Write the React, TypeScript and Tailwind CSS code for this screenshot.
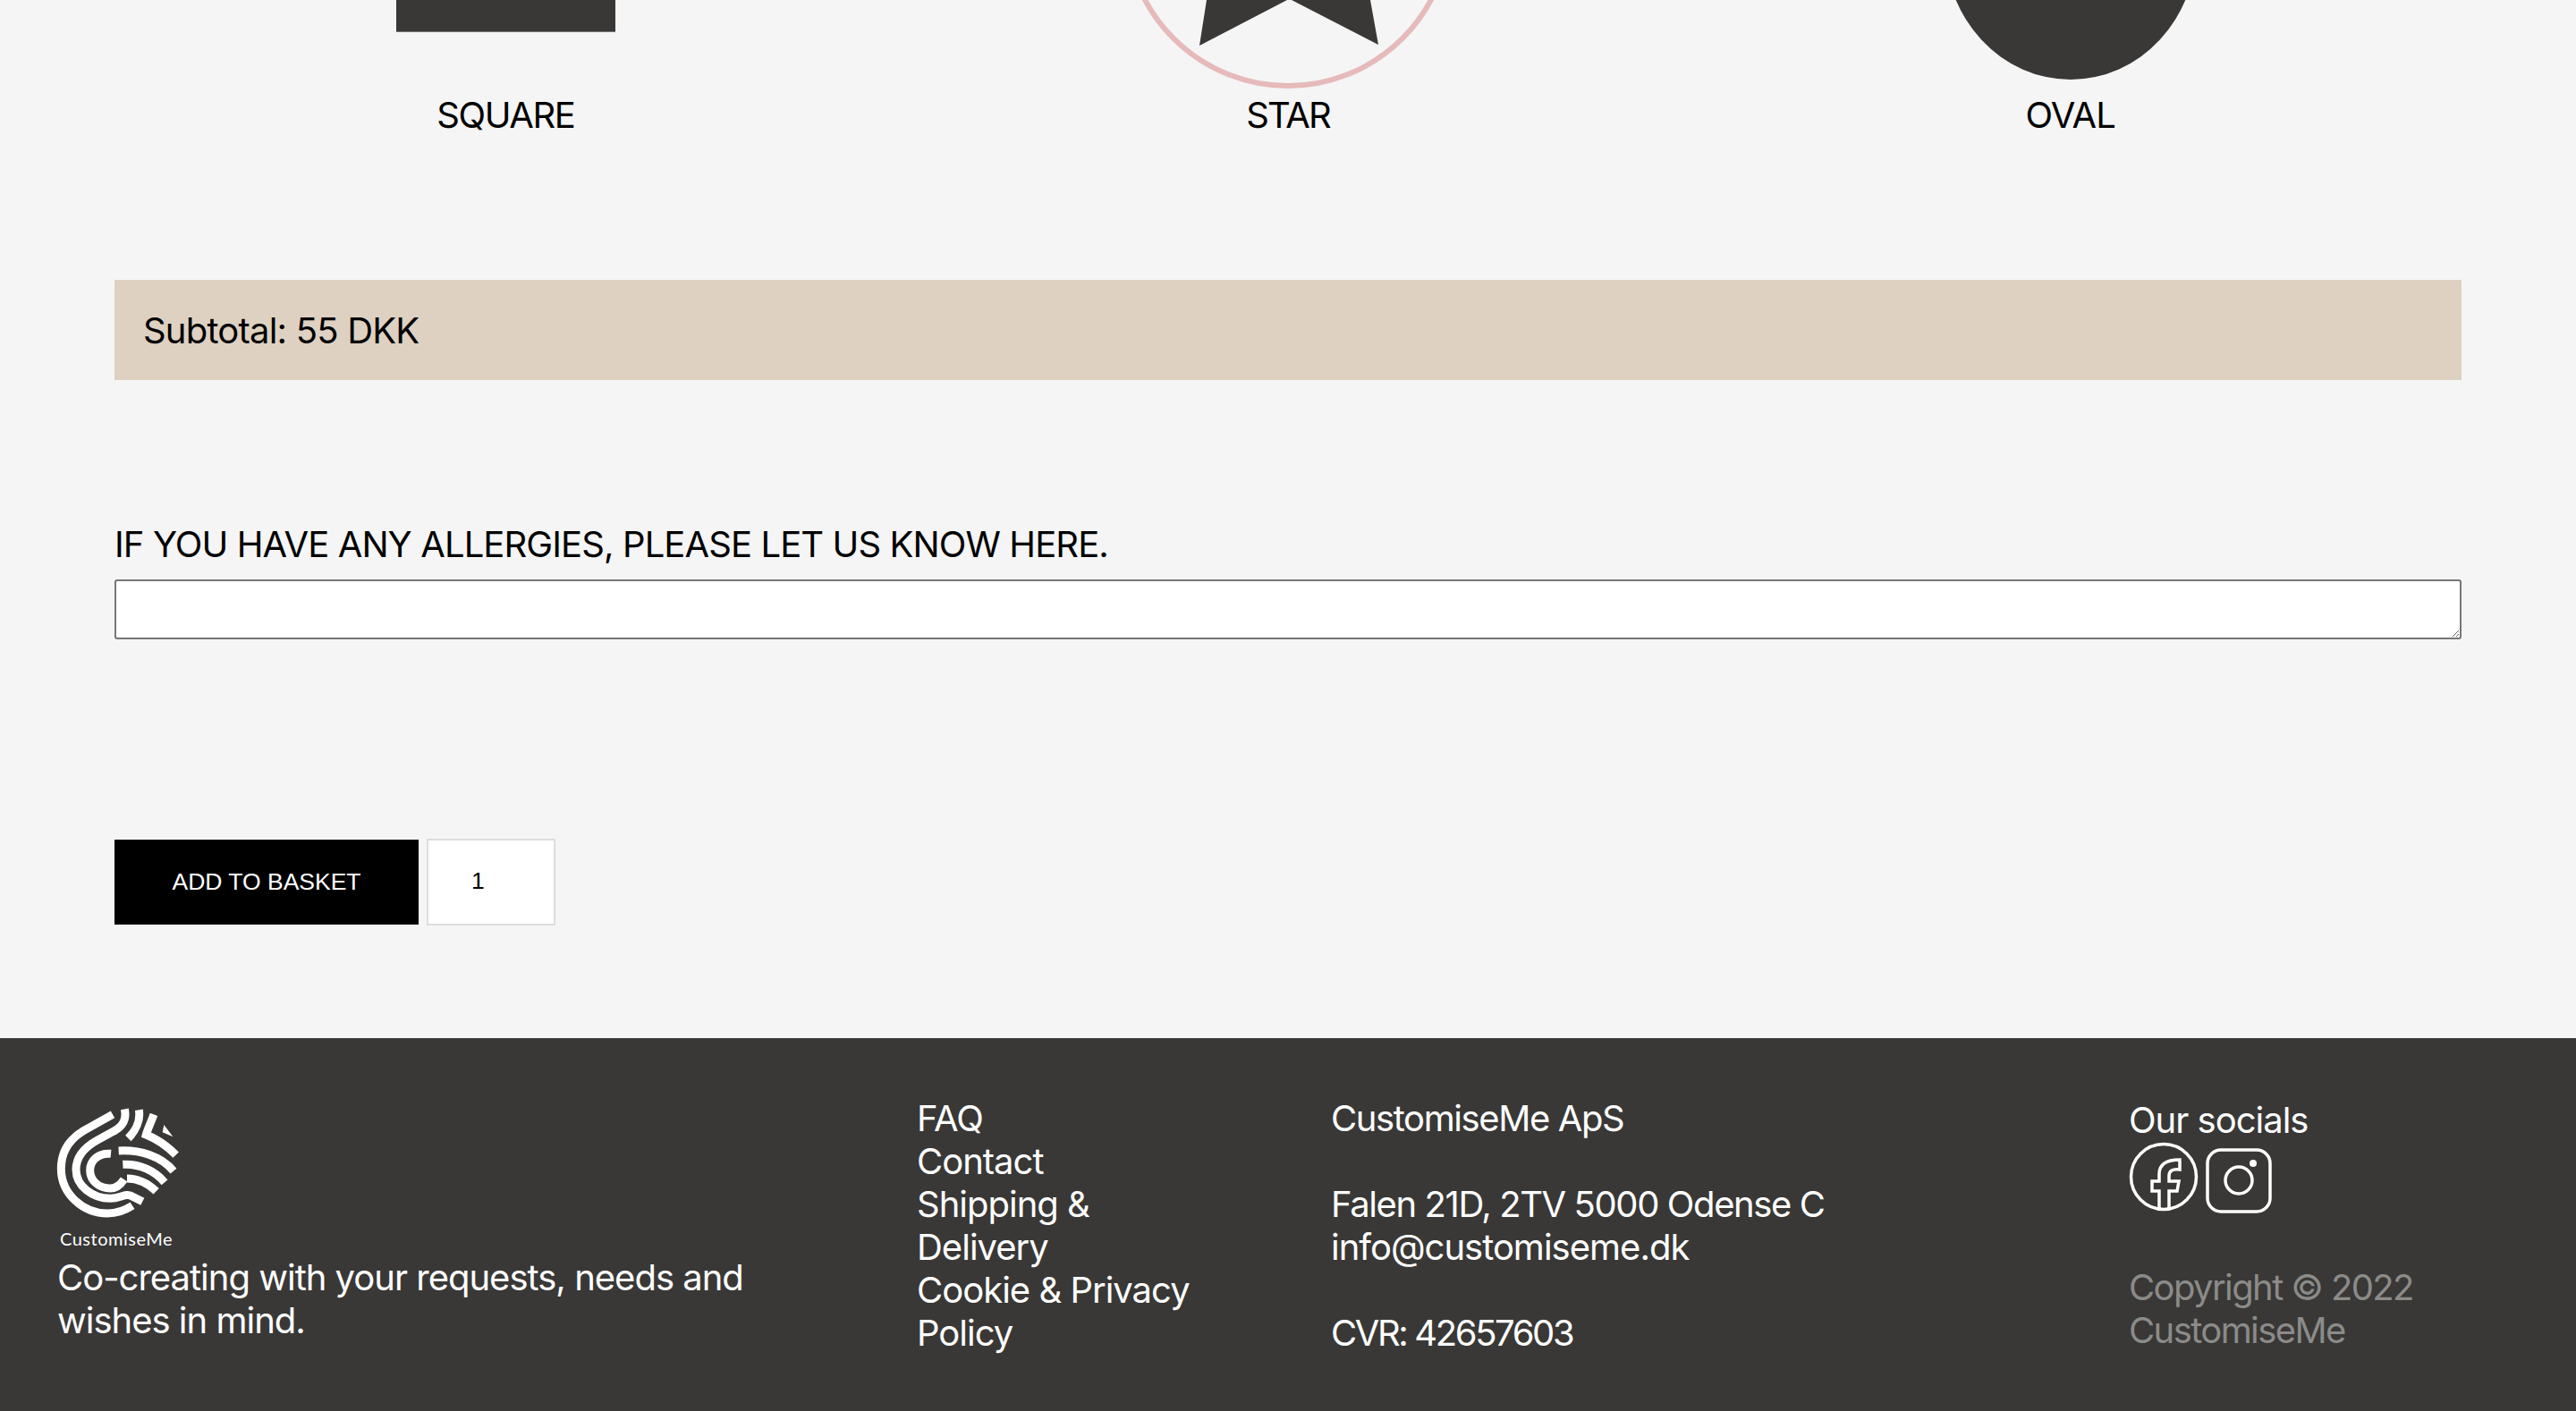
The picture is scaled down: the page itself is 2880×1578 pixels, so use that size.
import React from "react";

const font = "font-['Inter','Noto_Sans',sans-serif]";

function Logo() {
  return (
    <svg viewBox="60 85 420 375" className="w-[140px] h-[125px]" fill="none" stroke="#fff" strokeWidth="27">
      <path d="M258 110 L160 165 C105 198 85 245 85 292 C85 378 160 442 240 442 C270 442 300 432 324 416" />
      <path d="M298 92 C306 130 290 152 258 168 L205 197 C155 225 135 260 135 295 C135 350 190 392 250 392 C285 392 300 372 322 384 L358 402" />
      <path d="M252 242 C210 238 182 265 182 298 C182 335 215 358 250 358 C270 358 285 345 296 328" />
      <path d="M278 232 C350 228 420 250 462 300" />
      <path d="M292 278 C350 275 400 300 432 338" />
      <path d="M306 325 C345 325 380 345 404 368" />
      <path d="M346 95 C352 130 335 165 310 190" />
      <path d="M396 110 C385 140 375 160 370 178 C400 190 440 215 470 246" />
      <path d="M430 145 L460 185 L425 170 Z" fill="#fff" stroke="none" />
    </svg>
  );
}

function SocialIcons() {
  return (
    <div className="flex items-start gap-[8px]">
      <svg viewBox="0 0 78 78" className="w-[78px] h-[78px]" fill="none" stroke="#fff" strokeWidth="3.5">
        <circle cx="39" cy="39" r="36.5" />
        <path d="M34 74 V55 H26 V44 H34 V36 C34 25 42 20 57 20 V31 C48 30 45 33 45 38 V44 H56 L54 55 H45 V74" />
      </svg>
      <svg viewBox="0 0 74 74" className="w-[74px] h-[74px] mt-[7px]" fill="none" stroke="#fff" strokeWidth="3.5">
        <rect x="2" y="2" width="70" height="69" rx="15" />
        <circle cx="37" cy="36" r="15" />
        <circle cx="53" cy="17" r="4" fill="#fff" stroke="none" />
      </svg>
    </div>
  );
}

export default function App() {
  return (
    <div className={`${font} bg-[#f5f5f5] text-black text-[40px] leading-[48px] font-normal tracking-[-1px]`}>
      <div className="px-[128px] pb-[126px]">
        <div className="grid grid-cols-3 text-center">
          <div>
            <div className="h-[99px] flex justify-center">
              <div className="w-[245px] h-[36px] bg-[#393836] border-b border-[#777]" />
            </div>
            <p className="mt-[6px] tracking-[-1.4px]">SQUARE</p>
          </div>
          <div>
            <div className="h-[99px] flex justify-center">
              <svg viewBox="0 0 380 99" className="w-[380px] h-[99px]">
                <circle cx="190" cy="-85" r="181" fill="none" stroke="#e6baba" strokeWidth="6" />
                <path d="M91 51 L99 0 H189 Z M194 0 H282 L291 50 Z" fill="#393836" />
              </svg>
            </div>
            <p className="mt-[6px] tracking-[-2px]">STAR</p>
          </div>
          <div>
            <div className="h-[99px] flex justify-center">
              <svg viewBox="0 0 300 99" className="w-[300px] h-[99px]">
                <ellipse cx="150" cy="-63" rx="141" ry="152" fill="#393836" />
              </svg>
            </div>
            <p className="mt-[6px] tracking-[-1px]">OVAL</p>
          </div>
        </div>

        <div className="mt-[160px] h-[112px] bg-[#ded1c1] pl-[32px] pt-[2px] flex items-center tracking-[-0.8px]">
          Subtotal: 55 DKK
        </div>

        <p className="mt-[160px] tracking-[-0.9px]">IF YOU HAVE ANY ALLERGIES, PLEASE LET US KNOW HERE.</p>
        <textarea rows={1} className="block mt-[15px] w-full h-[67px] bg-white border-2 border-[#767676] rounded-[3px]" />

        <div className="mt-[223px] flex items-center gap-[9px] font-['Liberation_Sans',Arial,sans-serif] font-normal tracking-normal text-[26.5px]">
          <button className="w-[340px] h-[95px] pb-[2px] bg-black text-white">ADD TO BASKET</button>
          <input
            type="number"
            defaultValue={1}
            className="w-[144px] h-[97px] bg-white border-2 border-[#ddd] pl-[48px] pb-[2px] text-black"
          />
        </div>
      </div>

      <footer className="bg-[#393836] text-white h-[417px] pl-[64px] pt-[66px] grid grid-cols-[961px_463px_892px_1fr]">
        <div className="pt-[11px] -ml-[4px]">
          <Logo />
          <p className="text-[20px] leading-[28px] font-['Lato',sans-serif] font-normal tracking-[0.5px] ml-[7px] mt-[8px]">
            CustomiseMe
          </p>
          <p className="mt-[6px] ml-[4px]">
            Co-creating with your requests, needs and
            <br />
            wishes in mind.
          </p>
        </div>
        <div>
          FAQ
          <br />
          Contact
          <br />
          Shipping &amp;
          <br />
          Delivery
          <br />
          Cookie &amp; Privacy
          <br />
          Policy
        </div>
        <div>
          <span className="tracking-[-1.4px]">CustomiseMe ApS</span>
          <br />
          <br />
          <span className="tracking-[-1.4px]">Falen 21D, 2TV 5000 Odense C</span>
          <br />
          info@customiseme.dk
          <br />
          <br />
          <span className="tracking-[-2.4px]">CVR: 42657603</span>
        </div>
        <div className="pt-[2px]">
          <p>Our socials</p>
          <SocialIcons />
          <p className="mt-[58px] text-[#8b8b89] tracking-[-1.6px]">
            Copyright © 2022
            <br />
            CustomiseMe
          </p>
        </div>
      </footer>
    </div>
  );
}
